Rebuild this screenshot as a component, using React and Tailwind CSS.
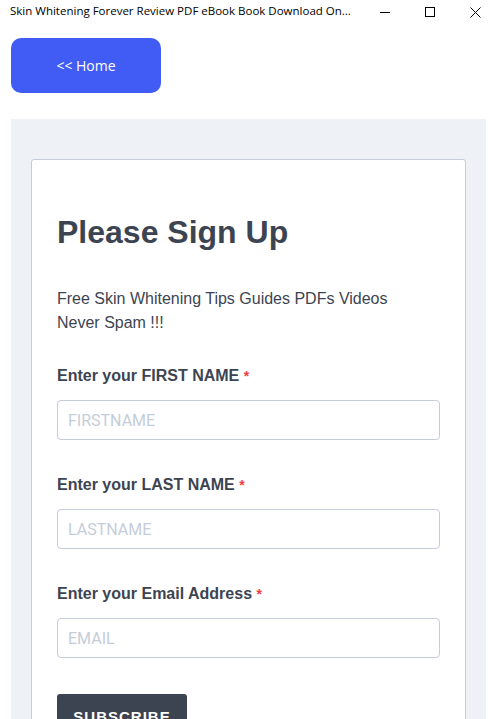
import React, { useState } from "react";

function Field({ label, name, placeholder, value, onChange, type = "text" }) {
  return (
    <div className="flex flex-col">
      <label
        htmlFor={name}
        className="text-[16px] leading-[24px] font-bold text-[#3d4451]"
      >
        {label} <span className="text-[#f03e3e] text-[14px] align-top">*</span>
      </label>
      <input
        id={name}
        name={name}
        type={type}
        value={value}
        onChange={onChange}
        placeholder={placeholder}
        className="mt-[12px] h-[40px] w-full rounded-[4px] border border-[#c5cdd9] px-[10px] text-[16px] text-[#3d4451] placeholder:text-[#c5cdd9] outline-none"
        style={{ fontFamily: "Roboto, sans-serif" }}
      />
    </div>
  );
}

export default function App() {
  const [firstName, setFirstName] = useState("");
  const [lastName, setLastName] = useState("");
  const [email, setEmail] = useState("");

  const handleSubmit = (e) => {
    e.preventDefault();
  };

  return (
    <div className="min-h-screen bg-white font-['Liberation_Sans',Arial,sans-serif]">
      {/* window title bar */}
      <div className="flex h-[22px] items-center justify-between bg-white pl-[10px] pr-[12px]">
        <span className="font-['Open_Sans',sans-serif] text-[11.5px] text-black">
          Skin Whitening Forever Review PDF eBook Book Download On...
        </span>
        <div className="flex items-center gap-[34px] pt-[2px]">
          <svg width="11" height="11" viewBox="0 0 11 11">
            <path d="M0 5.5h10" stroke="#000" strokeWidth="1" />
          </svg>
          <svg width="11" height="11" viewBox="0 0 11 11">
            <rect x="0.5" y="0.5" width="9" height="9" fill="none" stroke="#000" />
          </svg>
          <svg width="11" height="11" viewBox="0 0 11 11">
            <path d="M0.5 0.5l10 10M10.5 0.5l-10 10" stroke="#000" strokeWidth="1" />
          </svg>
        </div>
      </div>

      <div className="px-[11px] pt-[16px] pr-[7px]">
        <button className="flex h-[55px] w-[150px] items-center justify-center rounded-[10px] bg-[#405cf5] font-['Open_Sans',sans-serif] text-[14px] text-white">
          &lt;&lt; Home
        </button>

        <div className="mt-[26px] bg-[#eef1f6] px-[20px] pt-[40px] pb-[20px]">
          <form
            onSubmit={handleSubmit}
            className="rounded-[3px] border border-[#c5cdd9] bg-white px-[25px] pt-[52px] pb-[30px]"
          >
            <h1 className="text-[32px] leading-[40px] font-bold text-[#3d4451]">
              Please Sign Up
            </h1>
            <p className="mt-[35px] text-[16px] leading-[24px] text-[#3d4451]">
              Free Skin Whitening Tips Guides PDFs Videos
              <br />
              Never Spam !!!
            </p>

            <div className="mt-[29px] flex flex-col gap-[33px]">
              <Field
                label="Enter your FIRST NAME"
                name="firstname"
                placeholder="FIRSTNAME"
                value={firstName}
                onChange={(e) => setFirstName(e.target.value)}
              />
              <Field
                label="Enter your LAST NAME"
                name="lastname"
                placeholder="LASTNAME"
                value={lastName}
                onChange={(e) => setLastName(e.target.value)}
              />
              <Field
                label="Enter your Email Address"
                name="email"
                type="email"
                placeholder="EMAIL"
                value={email}
                onChange={(e) => setEmail(e.target.value)}
              />
            </div>

            <button
              type="submit"
              className="mt-[36px] h-[46px] w-[130px] rounded-[3px] bg-[#3d4451] text-[15px] font-bold tracking-[1px] text-white"
            >
              SUBSCRIBE
            </button>
          </form>
        </div>
      </div>
    </div>
  );
}
